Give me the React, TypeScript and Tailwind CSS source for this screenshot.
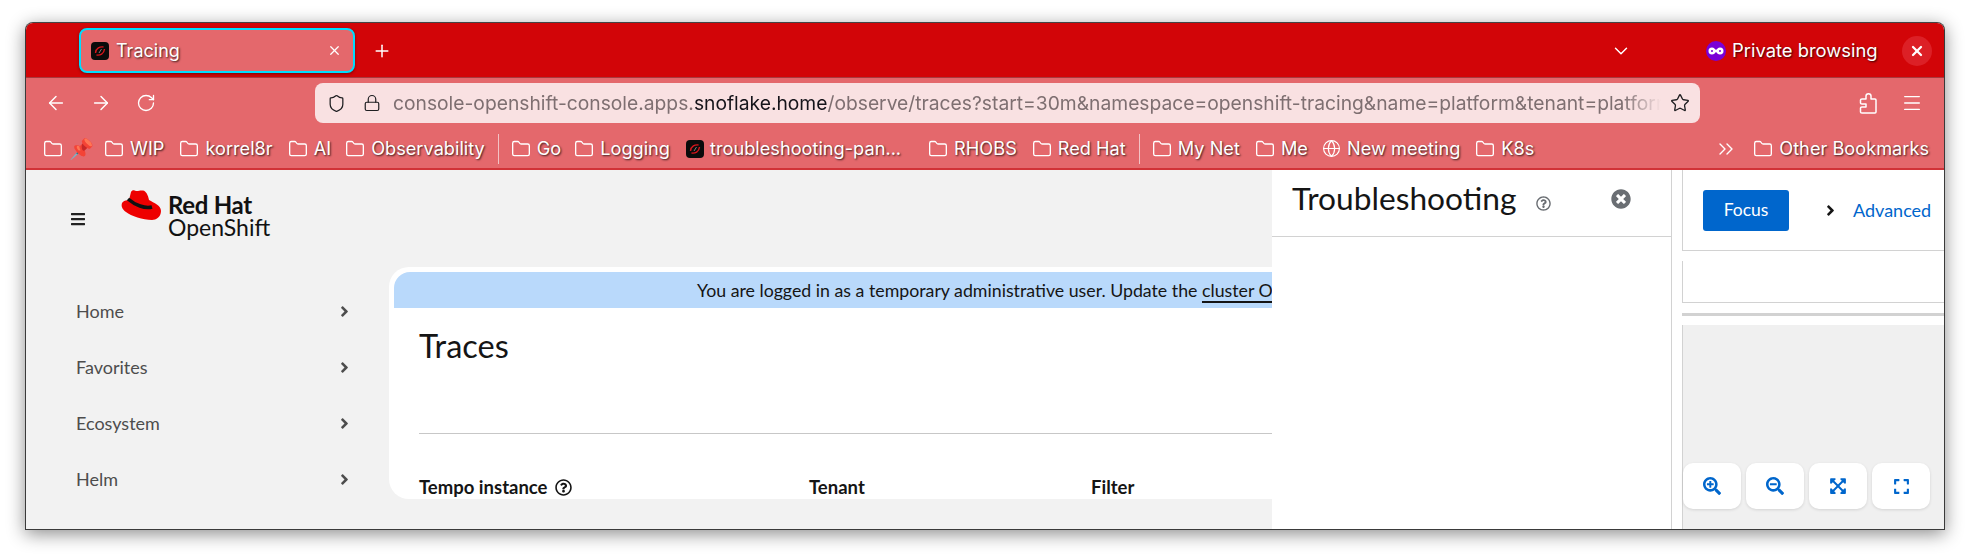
import React from 'react';
import { ArrowLeft, ArrowRight, ChevronDown, ChevronsRight, Folder, Globe, Lock, Menu, Plus, RotateCw, Shield, Star, X } from 'lucide-react';
import { FaAngleRight, FaBars, FaExpand, FaExpandArrowsAlt, FaRegQuestionCircle, FaSearchMinus, FaSearchPlus, FaTimesCircle } from 'react-icons/fa';

const shadowText = '[text-shadow:1px_1px_2px_rgba(0,0,0,0.75)]';

/* Small black square favicon with the red swirl */
const Favicon = () => (
  <svg width="18" height="18" viewBox="0 0 18 18" className="shrink-0">
    <rect width="18" height="18" rx="4" fill="#0b0b0b" />
    <path d="M4.5 11 C5 6 9 4.5 12.5 5" stroke="#d8151b" strokeWidth="1.4" fill="none" />
    <path d="M13.5 7 C13 12 9 13.5 5.5 13" stroke="#d8151b" strokeWidth="1.4" fill="none" />
    <path d="M8 11 L10.5 7" stroke="#999" strokeWidth="0.8" />
  </svg>
);

const Bookmark: React.FC<{ label?: string; icon?: React.ReactNode; className?: string }> = ({ label, icon, className }) => (
  <div className={`flex items-center gap-[6px] shrink-0 ${className ?? ''}`}>
    {icon ?? <Folder size={20} strokeWidth={1.6} className="text-white shrink-0 -ml-[1px]" />}
    {label && <span className={`text-white text-[18.2px] whitespace-nowrap ${shadowText}`}>{label}</span>}
  </div>
);

const Sep = () => <div className="w-px h-[30px] bg-[#f3c3c5] shrink-0 -mx-[3px]" />;

const NavItem: React.FC<{ label: string }> = ({ label }) => (
  <div className="flex items-center justify-between h-[56px] shrink-0 pl-[50px] pr-[14px] w-[341px]">
    <span className="text-[18px] text-[#4d4d4d]">{label}</span>
    <FaAngleRight size={17} className="text-[#4d4d4d]" />
  </div>
);

const ZoomButton: React.FC<{ children: React.ReactNode }> = ({ children }) => (
  <div className="w-[58px] h-[46px] bg-white rounded-[10px] shadow-[0_1px_3px_rgba(0,0,0,0.12)] flex items-center justify-center text-[#0066cc] shrink-0">
    {children}
  </div>
);

export default function App() {
  return (
    <div className="w-[1969px] h-[558px] bg-white overflow-hidden pt-[22px] pl-[25px] font-['Inter',sans-serif]">
      <div className="w-[1920px] h-[508px] rounded-t-[8px] border border-[#3a3a3a] border-t-[#444] shadow-[0_4px_18px_rgba(0,0,0,0.45)] flex flex-col overflow-hidden bg-white">

        {/* Tab strip */}
        <div className="h-[55px] bg-[#d20508] flex items-center shrink-0 pl-[53px] pt-[1px] border-b border-[#a83a3e]">
          <div className="w-[276px] h-[45px] rounded-[8px] border-2 border-[#00ddff] bg-[#e4686c] flex items-center pl-[10px] pr-[11px] gap-[7px] shadow-[0_1px_3px_rgba(0,0,0,0.4)]">
            <Favicon />
            <span className={`text-white text-[18px] ${shadowText}`}>Tracing</span>
            <X size={15} strokeWidth={2} className="text-white ml-auto" />
          </div>
          <Plus size={20} strokeWidth={1.8} className="text-white ml-[17px]" />
          <ChevronDown size={22} strokeWidth={1.6} className="text-white ml-[1218px]" />
          <div className="ml-[74px] w-[20px] h-[20px] rounded-full bg-[#7a00d6] flex items-center justify-center shrink-0">
            <svg width="16" height="8" viewBox="0 0 16 8">
              <path d="M4 0.5 C6 0.5 7 2 8 3 C9 2 10 0.5 12 0.5 C14.5 0.5 15.5 2 15.5 4 C15.5 6 14.5 7.5 12 7.5 C10 7.5 9 6 8 5 C7 6 6 7.5 4 7.5 C1.5 7.5 0.5 6 0.5 4 C0.5 2 1.5 0.5 4 0.5 Z M4 3 A1 1 0 1 0 4 5 A1 1 0 1 0 4 3 Z M12 3 A1 1 0 1 0 12 5 A1 1 0 1 0 12 3 Z" fill="#fff" fillRule="evenodd" />
            </svg>
          </div>
          <span className={`text-white text-[18.4px] ml-[6px] whitespace-nowrap ${shadowText}`}>Private browsing</span>
          <div className="w-[30px] h-[30px] rounded-full bg-[#dc2026] flex items-center justify-center ml-[24px] shrink-0">
            <X size={16} strokeWidth={3.4} className="text-white" />
          </div>
        </div>

        {/* Toolbar */}
        <div className="h-[47px] bg-[#e4686c] flex items-center shrink-0 pl-[19px] pt-[3px]">
          <ArrowLeft size={22} strokeWidth={1.6} className="text-white shrink-0" />
          <ArrowRight size={22} strokeWidth={1.6} className="text-white shrink-0 ml-[23px]" />
          <RotateCw size={20} strokeWidth={1.6} className="text-white shrink-0 ml-[24px]" />
          <div className="w-[1385px] h-[40px] rounded-[8px] bg-[#f9e1e2] ml-[159px] flex items-center shrink-0 pl-[12px] pr-[10px]">
            <Shield size={19} strokeWidth={1.6} className="text-[#1f1f22] shrink-0" />
            <Lock size={18} strokeWidth={1.6} className="text-[#1f1f22] shrink-0 ml-[17px]" />
            <div className="ml-[12px] w-[1268px] overflow-hidden whitespace-nowrap text-[19.25px] text-[#7e6f71] [mask-image:linear-gradient(to_right,black_97%,transparent)]">
              console-openshift-console.apps.<span className="text-[#15141a]">snoflake.home</span>/observe/traces?start=30m&amp;namespace=openshift-tracing&amp;name=platform&amp;tenant=platform
            </div>
            <Star size={20} strokeWidth={1.6} className="text-[#1f1f22] shrink-0 ml-auto" />
          </div>
          <svg width="18" height="22" viewBox="0 0 18 22" fill="none" stroke="#fff" strokeWidth="1.5" strokeLinejoin="round" className="ml-[159px] shrink-0">
            <path d="M7 7 V4 C7 1 12 1 12 4 V7 H16 Q17 7 17 8 V20 Q17 21 16 21 H3 Q1.5 21 1.5 20 V16 Q1.5 15 3 15 H7 V12 H3 Q1.5 12 1.5 11 V8 Q1.5 7 3 7 Z" />
          </svg>
          <Menu size={22} strokeWidth={1.4} className="text-white shrink-0 ml-[24px]" />
        </div>

        {/* Bookmarks */}
        <div className="h-[45px] bg-[#e4686c] border-b-2 border-[#d13237] flex items-center shrink-0 pl-[17px] pr-[15px] pt-[5px] gap-[16px]">
          <div className="flex items-center gap-[6px] shrink-0">
            <Folder size={20} strokeWidth={1.6} className="text-white" />
            <span className="w-[20px] text-[20px] leading-none font-['Noto_Sans',sans-serif]">📌</span>
          </div>
          <Bookmark label="WIP" />
          <Bookmark label="korrel8r" />
          <Bookmark label="AI" className="-mr-[1px]" />
          <Bookmark label="Observability" />
          <Sep />
          <Bookmark label="Go" className="-mr-[2px]" />
          <Bookmark label="Logging" />
          <Bookmark label="troubleshooting-pan..." icon={<Favicon />} className="mr-[12px]" />
          <Bookmark label="RHOBS" />
          <Bookmark label="Red Hat" />
          <Sep />
          <Bookmark label="My Net" />
          <Bookmark label="Me" className="-mr-[2px]" />
          <Bookmark label="New meeting" icon={<Globe size={19} strokeWidth={1.5} className="text-white shrink-0" />} />
          <Bookmark label="K8s" />
          <ChevronsRight size={24} strokeWidth={1.4} className="text-white shrink-0 ml-auto" />
          <Bookmark label="Other Bookmarks" />
        </div>

        {/* Page */}
        <div className="flex-1 flex min-h-0 font-['Lato',sans-serif] text-[#151515]">
          {/* Console */}
          <div className="w-[1246px] shrink-0 bg-[#f2f2f2] flex flex-col overflow-hidden">
            <div className="h-[97px] shrink-0 flex items-start pl-[44px] pt-[20px]">
              <FaBars size={16} className="text-[#222] mt-[21px]" />
              <svg width="41" height="31" viewBox="0 0 41 31" className="ml-[35px] shrink-0">
                <path d="M10 2 C11 0 13 0 15 1 C17 1.5 19 0 22 0.5 C25 1 27 5 28 10 C33 13 40 15 40 21 C40 27 35 30 31 30 C22 30 10 26 5 22 C1 19 0 16 1 13 C2 11 5 10 8 10 Z" fill="#ee0000" />
                <path d="M7 9 C14 15 24 19 31 17" stroke="#111" strokeWidth="3.6" fill="none" />
              </svg>
              <div className="ml-[6px] mt-[3px] leading-[23px]">
                <div className="text-[24px] font-bold tracking-[-0.3px] text-[#111]">Red Hat</div>
                <div className="text-[23px] text-[#111]">OpenShift</div>
              </div>
            </div>
            <div className="flex flex-1 min-h-0">
              <div className="w-[363px] shrink-0 flex flex-col overflow-hidden pt-[16px]">
                <NavItem label="Home" />
                <NavItem label="Favorites" />
                <NavItem label="Ecosystem" />
                <NavItem label="Helm" />
                <NavItem label="Workloads" />
              </div>
              {/* Card, cut off below by the window */}
              <div className="flex-1 h-[232px] bg-white rounded-tl-[20px] rounded-bl-[20px] pl-[5px] pt-[5px] overflow-hidden">
                <div className="h-[36px] bg-[#b9d9fb] rounded-tl-[16px] flex items-center pl-[303px] whitespace-nowrap overflow-hidden text-[17.75px] text-[#151515]">
                  You are logged in as a temporary administrative user. Update the&nbsp;<span className="underline underline-offset-4 decoration-2">cluster OAuth configuration</span>
                </div>
                <div className="pl-[25px]">
                  <h1 className="text-[32.5px] leading-[36px] mt-[20px] font-normal">Traces</h1>
                  <div className="h-px bg-[#c7c7c7] mt-[69px]" />
                  <div className="flex mt-[43px] text-[18.5px] font-bold leading-[20px] h-[20px]">
                    <div className="w-[390px] flex items-center gap-[8px]">
                      Tempo instance
                      <FaRegQuestionCircle size={17} />
                    </div>
                    <div className="w-[282px]">Tenant</div>
                    <div>Filter</div>
                  </div>
                </div>
              </div>
            </div>
          </div>

          {/* Troubleshooting panel */}
          <div className="w-[400px] shrink-0 bg-white border-r border-[#d2d2d2] flex flex-col">
            <div className="h-[67px] border-b border-[#d2d2d2] flex items-center pl-[20px] shrink-0 pb-[8px]">
              <h2 className="text-[31.7px] font-normal leading-none">Troubleshooting</h2>
              <FaRegQuestionCircle size={15} className="text-[#6a6e73] ml-[20px] mt-[8px]" />
              <FaTimesCircle size={20} className="text-[#6a6e73] ml-[60px]" />
            </div>
          </div>

          {/* Topology pane */}
          <div className="flex-1 min-w-0 pl-[10px] bg-white flex flex-col">
            <div className="h-[81px] shrink-0 border-l border-b border-[#d2d2d2] flex items-center pl-[20px]">
              <div className="w-[86px] h-[41px] rounded-[3px] bg-[#0066cc] text-white text-[17.5px] flex items-center justify-center">Focus</div>
              <FaAngleRight size={17} className="text-[#151515] ml-[33px]" />
              <span className="text-[18px] text-[#0066cc] ml-[14px]">Advanced</span>
            </div>
            <div className="h-[42px] shrink-0 mt-[10px] border-l border-b border-[#d2d2d2]" />
            <div className="h-[3px] shrink-0 mt-[10px] bg-[#d2d2d2]" />
            <div className="flex-1 mt-[9px] bg-[#f0f0f0] border-l border-[#d2d2d2] flex items-start pt-[138px] gap-[5px]">
              <ZoomButton><FaSearchPlus size={18} /></ZoomButton>
              <ZoomButton><FaSearchMinus size={18} /></ZoomButton>
              <ZoomButton><FaExpandArrowsAlt size={18} /></ZoomButton>
              <ZoomButton><FaExpand size={17} /></ZoomButton>
            </div>
          </div>
        </div>
      </div>
    </div>
  );
}
